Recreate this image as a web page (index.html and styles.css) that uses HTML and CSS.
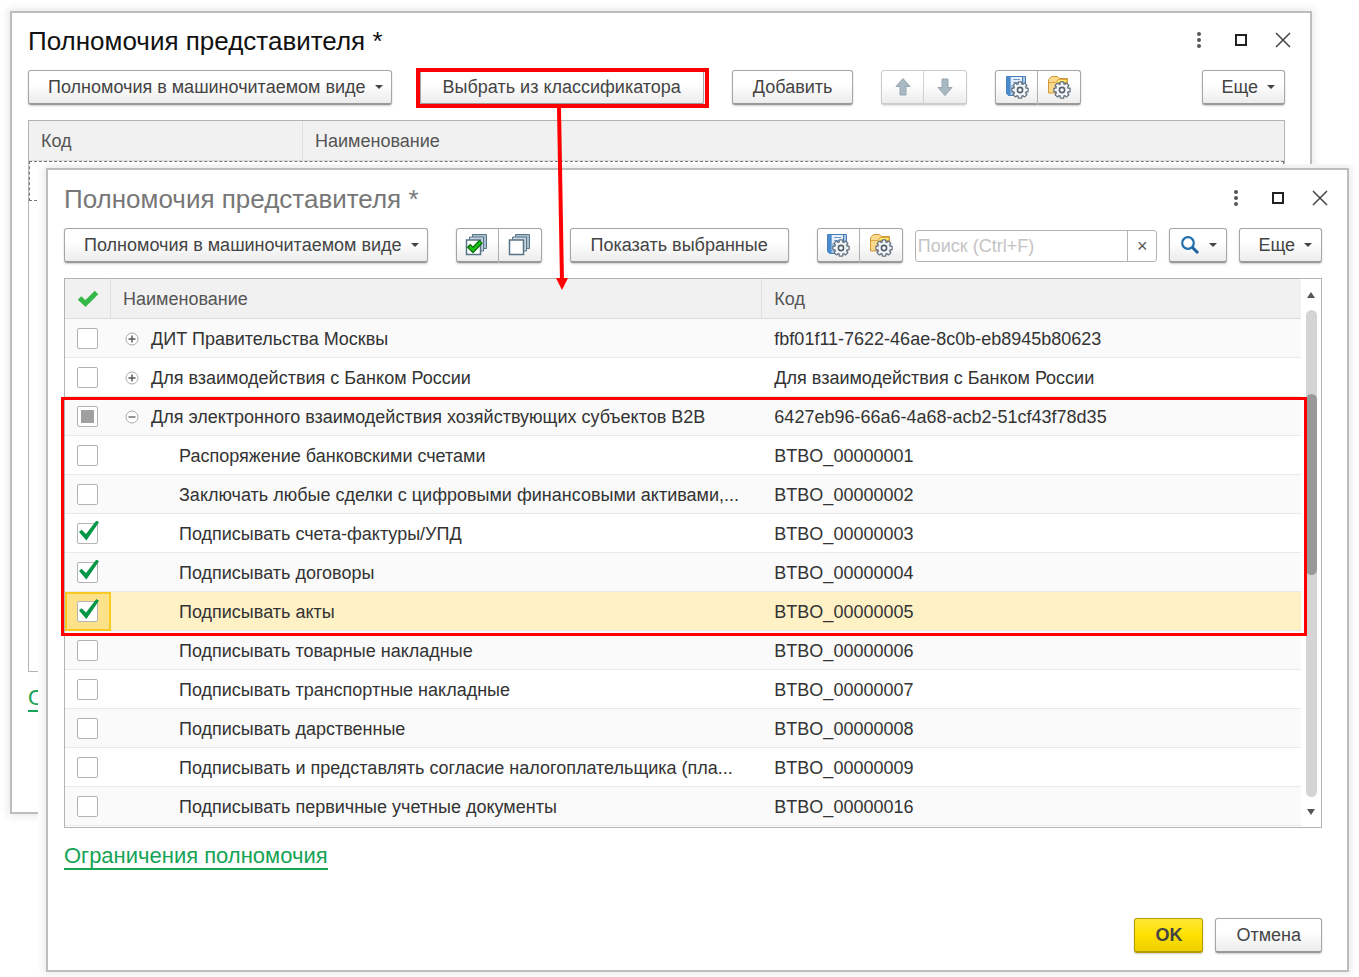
FILE: index.html
```html
<!DOCTYPE html>
<html lang="ru">
<head>
<meta charset="utf-8">
<meta name="viewport" content="width=device-width, initial-scale=1">
<title>Полномочия представителя</title>
<link rel="stylesheet" href="styles.css">
</head>
<body>
<svg class="sprite" aria-hidden="true">
  <symbol id="gear" viewBox="0 0 18 18">
    <g fill="#61717f">
      <circle cx="9" cy="9" r="7"/>
      <rect x="6.6" y="0.3" width="4.8" height="17.4" rx="1"/>
      <rect x="6.6" y="0.3" width="4.8" height="17.4" rx="1" transform="rotate(45 9 9)"/>
      <rect x="6.6" y="0.3" width="4.8" height="17.4" rx="1" transform="rotate(90 9 9)"/>
      <rect x="6.6" y="0.3" width="4.8" height="17.4" rx="1" transform="rotate(135 9 9)"/>
    </g>
    <g fill="#f3f6f8">
      <circle cx="9" cy="9" r="5.8"/>
      <rect x="7.8" y="1.5" width="2.4" height="15"/>
      <rect x="7.8" y="1.5" width="2.4" height="15" transform="rotate(45 9 9)"/>
      <rect x="7.8" y="1.5" width="2.4" height="15" transform="rotate(90 9 9)"/>
      <rect x="7.8" y="1.5" width="2.4" height="15" transform="rotate(135 9 9)"/>
    </g>
    <circle cx="9" cy="9" r="2.6" fill="#fff" stroke="#55626d" stroke-width="1.6"/>
  </symbol>
  <symbol id="icon-report" viewBox="0 0 24 24">
    <path d="M1.500 1.500h19v19h-17l-2-2z" fill="#a9caea" stroke="#4a7db4"/>
    <path d="M1.500 1.500h4v19h-2l-2-2z" fill="#4b8bcc"/>
    <path d="M6 2h11v8H6z" fill="#e4effa"/>
    <path d="M8 4.500h7M8 7.500h7" stroke="#6d9bcb"/>
    <path d="M17.500 2v8" stroke="#4a7db4"/>
    <use href="#gear" x="6" y="6" width="18" height="18"/>
  </symbol>
  <symbol id="icon-folder" viewBox="0 0 24 24">
    <path d="M1.500 18V4.500L4.500 1.500h6l2 2h8v14.500z" fill="#fbd98a" stroke="#d2983a"/>
    <path d="M2 7.500h7l2-3h9v3H11" fill="#ffe96a" stroke="#dba541"/>
    <use href="#gear" x="6" y="6" width="18" height="18"/>
  </symbol>
  <symbol id="icon-up" viewBox="0 0 24 24">
    <path d="M12 3.500l7 8h-4v8.500H9v-8.500H5z" fill="#a9b9c2" stroke="#95a7b2"/>
  </symbol>
  <symbol id="icon-check-all" viewBox="0 0 24 24">
    <path d="M7.500 6V1.500h14v14H17" fill="#a9bfcd" stroke="#587487"/>
    <path d="M4.500 8V4h14v14H16" fill="#c8d5de" stroke="#587487"/>
    <path d="M1.500 7h14v14.500h-14z" fill="#fff" stroke="#587487" stroke-width="1.500"/>
    <path d="M3.500 12.500l4.500 4.500L16 8.500" fill="none" stroke="#0a6a0a" stroke-width="5"/>
    <path d="M4.500 13.500l3.500 3.500 7.500-8" fill="none" stroke="#18c518" stroke-width="2.500"/>
  </symbol>
  <symbol id="icon-uncheck-all" viewBox="0 0 24 24">
    <path d="M7.500 6V1.500h14v14H17" fill="#a9bfcd" stroke="#587487"/>
    <path d="M4.500 8V4h14v14H16" fill="#c8d5de" stroke="#587487"/>
    <path d="M1.500 7h14v14.500h-14z" fill="#fff" stroke="#587487" stroke-width="1.500"/>
  </symbol>
  <symbol id="icon-search" viewBox="0 0 20 20">
    <circle cx="8" cy="8" r="5.800" fill="none" stroke="#2270b0" stroke-width="2.200"/>
    <path d="M12.500 12.500l5.500 5.500" stroke="#1c639f" stroke-width="3"/>
  </symbol>
  <symbol id="icon-dots" viewBox="0 0 16 16">
    <g fill="#555"><circle cx="8" cy="2" r="2"/><circle cx="8" cy="8" r="2"/><circle cx="8" cy="14" r="2"/></g>
  </symbol>
  <symbol id="icon-max" viewBox="0 0 16 16">
    <path d="M3 3h10v10H3z" fill="none" stroke="#222" stroke-width="2"/>
  </symbol>
  <symbol id="icon-close" viewBox="0 0 16 16">
    <path d="M1 1l14 14M15 1L1 15" stroke="#444" stroke-width="1.500"/>
  </symbol>
  <symbol id="icon-plus" viewBox="0 0 14 14">
    <circle cx="7" cy="7" r="6" fill="#fff" stroke="#aaa"/><path d="M3.500 7h7M7 3.500v7" stroke="#555" stroke-width="1.400"/>
  </symbol>
  <symbol id="icon-minus" viewBox="0 0 14 14">
    <circle cx="7" cy="7" r="6" fill="#fff" stroke="#aaa"/><path d="M3.500 7h7" stroke="#666" stroke-width="1.400"/>
  </symbol>
</svg>

<main class="desktop">
  <section class="window window-back">
    <header class="titlebar">
      <h1>Полномочия представителя *</h1>
      <div class="window-controls">
        <button type="button" aria-label="Меню"><svg><use href="#icon-dots"/></svg></button>
        <button type="button" aria-label="Развернуть"><svg><use href="#icon-max"/></svg></button>
        <button type="button" aria-label="Закрыть"><svg><use href="#icon-close"/></svg></button>
      </div>
    </header>
    <div class="toolbar">
      <button type="button" class="btn btn-menu">Полномочия в машиночитаемом виде<i class="caret"></i></button>
      <button type="button" class="btn btn-pick">Выбрать из классификатора</button>
      <button type="button" class="btn">Добавить</button>
      <div class="group group-off">
        <button type="button" class="btn" aria-label="Переместить вверх" disabled><svg><use href="#icon-up"/></svg></button>
        <button type="button" class="btn" aria-label="Переместить вниз" disabled><svg class="flip"><use href="#icon-up"/></svg></button>
      </div>
      <div class="group">
        <button type="button" class="btn" aria-label="Выбрать настройки"><svg><use href="#icon-report"/></svg></button>
        <button type="button" class="btn" aria-label="Сохранить настройки"><svg><use href="#icon-folder"/></svg></button>
      </div>
      <button type="button" class="btn btn-more push">Еще<i class="caret"></i></button>
    </div>
    <div class="list list-empty">
      <table>
        <colgroup><col class="col-short"><col></colgroup>
        <thead><tr><th>Код</th><th>Наименование</th></tr></thead>
        <tbody><tr class="placeholder"><td colspan="2"></td></tr></tbody>
      </table>
    </div>
    <a class="link" href="#">О</a>
  </section>

  <div class="front-layer">
  <section class="window window-front">
    <header class="titlebar">
      <h2>Полномочия представителя *</h2>
      <div class="window-controls">
        <button type="button" aria-label="Меню"><svg><use href="#icon-dots"/></svg></button>
        <button type="button" aria-label="Развернуть"><svg><use href="#icon-max"/></svg></button>
        <button type="button" aria-label="Закрыть"><svg><use href="#icon-close"/></svg></button>
      </div>
    </header>
    <div class="toolbar">
      <button type="button" class="btn btn-menu">Полномочия в машиночитаемом виде<i class="caret"></i></button>
      <div class="group">
        <button type="button" class="btn" aria-label="Отметить все"><svg><use href="#icon-check-all"/></svg></button>
        <button type="button" class="btn" aria-label="Снять отметки"><svg><use href="#icon-uncheck-all"/></svg></button>
      </div>
      <button type="button" class="btn">Показать выбранные</button>
      <div class="toolbar-tail">
        <div class="group">
          <button type="button" class="btn" aria-label="Выбрать настройки"><svg><use href="#icon-report"/></svg></button>
          <button type="button" class="btn" aria-label="Сохранить настройки"><svg><use href="#icon-folder"/></svg></button>
        </div>
        <div class="search">
          <input type="text" placeholder="Поиск (Ctrl+F)" aria-label="Поиск">
          <button type="button" aria-label="Очистить">×</button>
        </div>
        <button type="button" class="btn btn-find" aria-label="Найти"><svg><use href="#icon-search"/></svg><i class="caret"></i></button>
        <button type="button" class="btn btn-more">Еще<i class="caret"></i></button>
      </div>
    </div>
    <div class="list list-full">
      <table>
        <colgroup><col class="col-mark"><col class="col-name"><col></colgroup>
        <thead>
          <tr>
            <th class="mark"><svg class="head-check" viewBox="0 0 22 18" role="img" aria-label="Отметка"><path d="M2.500 8l6 5.500L19.500 2.500" fill="none" stroke="#35b848" stroke-width="5"/></svg></th>
            <th>Наименование</th><th>Код</th>
          </tr>
        </thead>
        <tbody>
          <tr><td class="mark"><input type="checkbox" aria-labelledby="n1"></td><td id="n1"><svg class="node"><use href="#icon-plus"/></svg>ДИТ Правительства Москвы</td><td>fbf01f11-7622-46ae-8c0b-eb8945b80623</td></tr>
          <tr><td class="mark"><input type="checkbox" aria-labelledby="n2"></td><td id="n2"><svg class="node"><use href="#icon-plus"/></svg>Для взаимодействия с Банком России</td><td>Для взаимодействия с Банком России</td></tr>
        </tbody>
        <tbody class="framed">
          <tr><td class="mark"><input type="checkbox" class="partial" aria-labelledby="n3"></td><td id="n3"><svg class="node"><use href="#icon-minus"/></svg>Для электронного взаимодействия хозяйствующих субъектов B2B</td><td>6427eb96-66a6-4a68-acb2-51cf43f78d35</td></tr>
          <tr><td class="mark"><input type="checkbox" aria-labelledby="n4"></td><td id="n4" class="sub">Распоряжение банковскими счетами</td><td>BTBO_00000001</td></tr>
          <tr><td class="mark"><input type="checkbox" aria-labelledby="n5"></td><td id="n5" class="sub">Заключать любые сделки с цифровыми финансовыми активами,...</td><td>BTBO_00000002</td></tr>
          <tr><td class="mark"><input type="checkbox" checked aria-labelledby="n6"></td><td id="n6" class="sub">Подписывать счета-фактуры/УПД</td><td>BTBO_00000003</td></tr>
          <tr><td class="mark"><input type="checkbox" checked aria-labelledby="n7"></td><td id="n7" class="sub">Подписывать договоры</td><td>BTBO_00000004</td></tr>
          <tr class="current"><td class="mark"><input type="checkbox" checked aria-labelledby="n8"></td><td id="n8" class="sub">Подписывать акты</td><td>BTBO_00000005</td></tr>
        </tbody>
        <tbody>
          <tr><td class="mark"><input type="checkbox" aria-labelledby="n9"></td><td id="n9" class="sub">Подписывать товарные накладные</td><td>BTBO_00000006</td></tr>
          <tr><td class="mark"><input type="checkbox" aria-labelledby="n10"></td><td id="n10" class="sub">Подписывать транспортные накладные</td><td>BTBO_00000007</td></tr>
          <tr><td class="mark"><input type="checkbox" aria-labelledby="n11"></td><td id="n11" class="sub">Подписывать дарственные</td><td>BTBO_00000008</td></tr>
          <tr><td class="mark"><input type="checkbox" aria-labelledby="n12"></td><td id="n12" class="sub">Подписывать и представлять согласие налогоплательщика (пла...</td><td>BTBO_00000009</td></tr>
          <tr><td class="mark"><input type="checkbox" aria-labelledby="n13"></td><td id="n13" class="sub">Подписывать первичные учетные документы</td><td>BTBO_00000016</td></tr>
        </tbody>
      </table>
      <div class="scrollbar" aria-hidden="true">
        <i class="scroll-up"></i>
        <div class="track"><div class="thumb"></div></div>
        <i class="scroll-down"></i>
      </div>
    </div>
    <a class="link" href="#">Ограничения полномочия</a>
    <footer class="actions">
      <button type="button" class="btn btn-ok">OK</button>
      <button type="button" class="btn">Отмена</button>
    </footer>
  </section>
  </div>

  <svg class="pointer" viewBox="0 0 16 184" aria-hidden="true">
    <path d="M5 1l3 174" stroke="#f00" stroke-width="4" stroke-linecap="round"/>
    <path d="M2 171h12l-6 12z" fill="#f00"/>
  </svg>
</main>
</body>
</html>
```
FILE: styles.css
```css
* { box-sizing: border-box; }

body {
  margin: 0;
  background: #fff;
  color: #333;
  font: 18px/22px "Liberation Sans", Arial, sans-serif;
}

button, input { font: inherit; color: inherit; }
.sprite { position: absolute; width: 0; height: 0; }

/* The two windows share one grid cell and overlap */
.desktop {
  display: grid;
  position: relative;
  min-height: 100vh;
}

.window {
  display: flex;
  flex-direction: column;
  background: #fff;
  border: 2px solid #bdbdbd;
  padding: 14px 25px 17px 16px;
  box-shadow: 0 0 8px 2px #e8e8e8;
}

.window-back {
  grid-area: 1 / 1;
  margin: 11px 47px 163px 10px;
}

.front-layer {
  grid-area: 1 / 1;
  z-index: 1;
  display: flex;
  margin: 164px 0 0 38px;
  padding: 4px 10px 5px 8px;
  background: #fff;
  overflow: hidden;
}

.window-front { flex: 1; min-width: 0; padding-top: 15px; }
.window-front h2 { color: #777; }

.titlebar {
  display: flex;
  align-items: center;
  justify-content: space-between;
  height: 28px;
}

.titlebar h1,
.titlebar h2 {
  margin: 0;
  font-size: 26px;
  line-height: 28px;
  font-weight: 400;
}
.titlebar h1 { color: #111; }

.window-controls { display: flex; gap: 18px; margin-right: -10px; }
.window-controls button {
  display: flex;
  align-items: center;
  justify-content: center;
  width: 24px;
  height: 24px;
  margin-bottom: 2px;
  padding: 0;
  border: 0;
  background: none;
}
.window-controls svg { width: 16px; height: 16px; }

/* Toolbar */
.toolbar {
  display: flex;
  align-items: center;
  gap: 28px;
  margin-top: 15px;
}
.toolbar-tail { display: flex; flex: 1; align-items: center; gap: 12px; min-width: 0; }
.push { margin-left: auto; }

.btn {
  display: flex;
  align-items: center;
  justify-content: center;
  flex: none;
  height: 35px;
  padding: 0 20px;
  border: 1px solid #a6a6a6;
  border-bottom: 2px solid #999;
  border-radius: 3px;
  background: linear-gradient(#fff 40%, #ececec);
  box-shadow: 0 1px 2px #ccc;
  color: #444;
  white-space: nowrap;
}
.btn svg { width: 24px; height: 24px; }
.btn-menu { padding: 0 8px 0 19px; }
.btn-more { padding: 0 9px 0 18px; }

.caret {
  margin-left: 9px;
  border: 4px solid transparent;
  border-top-color: #444;
  border-bottom: 0;
}

.btn-pick { position: relative; padding: 0 22px; }
.btn-pick::after {
  content: "";
  position: absolute;
  inset: -3px -6px -5px -5px;
  border: 4px solid #f00;
}

.group { display: flex; flex: none; }
.group .btn { width: 43px; padding: 0; }
.group .btn:first-child { border-radius: 3px 0 0 3px; }
.group .btn:last-child { border-left: 0; border-radius: 0 3px 3px 0; }
.group-off .btn { border-color: #ccc; box-shadow: 0 1px 2px #e4e4e4; }
.flip { transform: rotate(180deg); }

.search {
  display: flex;
  flex: 1;
  min-width: 0;
  height: 32px;
  border: 1px solid #b3b3b3;
  border-radius: 3px;
}
.search input {
  flex: 1;
  min-width: 0;
  padding: 0 2px;
  border: 0;
  background: none;
}
.search input::placeholder { color: #c4c4c4; }
.search button {
  width: 29px;
  padding: 0;
  border: 0;
  border-left: 1px solid #b3b3b3;
  background: none;
  color: #555;
}

.btn-find { padding: 0 9px 0 10px; }
.btn-find svg { width: 20px; height: 20px; }

/* Lists */
.list {
  display: flex;
  margin-top: 15px;
  border: 1px solid #b3b3b3;
}
.list table {
  flex: 1;
  width: 100%;
  min-width: 0;
  table-layout: fixed;
  border-collapse: separate;
  border-spacing: 0;
}
.list th {
  height: 40px;
  padding: 0 12px;
  background: #f1f1f1;
  border-right: 1px solid #e0e0e0;
  border-bottom: 1px solid #dcdcdc;
  color: #555;
  font-weight: 400;
  text-align: left;
}
.list th:last-child { border-right: 0; }
.list td {
  height: 39px;
  padding: 2px 12px 0;
  border-bottom: 1px solid #e8e8e8;
  overflow: hidden;
  white-space: nowrap;
  text-overflow: ellipsis;
}
.list .mark { padding: 0 0 0 12px; }
.list .sub { padding: 2px 0 0 68px; }

.list-empty { flex: 1; }
.list-empty table { align-self: flex-start; }
.col-short { width: 274px; }
.list-empty .placeholder td { height: 40px; border: 1px dashed #777; }

.list-full tbody tr { background: #fff; }
.list-full tbody:first-of-type tr:nth-child(odd),
.framed tr:nth-child(odd),
.list-full tbody:last-child tr:nth-child(odd) { background: #fafafa; }
.list-full { padding-bottom: 1px; }
.col-mark { width: 46px; }
.col-name { width: 52.7%; }

.list-full tbody .current,
.list-full tbody.framed .current { background: #fef1c6; }
.current .mark {
  background: #fee28a;
  border: 2px solid #f8c920;
  padding-left: 10px;
}

.framed { position: relative; z-index: 2; }
.framed::after {
  content: "";
  position: absolute;
  inset: 0 -6px -5px -4px;
  border: 3px solid #f00;
  pointer-events: none;
}

.node { width: 14px; height: 14px; margin: 0 12px 0 2px; vertical-align: -1px; }
.head-check { display: block; width: 22px; height: 18px; }

input[type="checkbox"] {
  appearance: none;
  display: block;
  width: 21px;
  height: 21px;
  margin: 0;
  border: 1px solid #b3b3b3;
  border-radius: 2px;
  background: #fff;
  position: relative;
}
.partial::before {
  content: "";
  display: block;
  width: 13px;
  height: 13px;
  margin: 3px;
  background: #a0a0a0;
}
input[type="checkbox"]:checked::after {
  content: "";
  position: absolute;
  inset: -3px -2px 2px 1px;
  background: #009646;
  clip-path: polygon(0 57%, 13% 46%, 35% 67%, 87% 0, 100% 9%, 37% 100%);
}

.scrollbar {
  display: flex;
  flex-direction: column;
  align-items: center;
  flex: none;
  width: 20px;
  padding: 13px 0 11px;
}
.scroll-up, .scroll-down { border: 4px solid transparent; }
.scroll-up { border-top: 0; border-bottom: 6px solid #555; }
.scroll-down { border-bottom: 0; border-top: 6px solid #555; }
.track {
  flex: 1;
  width: 11px;
  margin: 12px 0;
  padding-top: 84px;
  border-radius: 6px;
  background: #d4d4d4;
}
.thumb { height: 181px; border-radius: 6px; background: #999; }

.link {
  align-self: flex-start;
  margin-top: 16px;
  border-bottom: 2px solid #15a355;
  color: #15a355;
  font-size: 22px;
  line-height: 24px;
  text-decoration: none;
}
.window-back .link { margin-top: 14px; margin-bottom: 83px; }

.actions {
  display: flex;
  justify-content: flex-end;
  gap: 12px;
  margin-top: auto;
}
.btn-ok {
  width: 69px;
  border-color: #b39b00;
  background: linear-gradient(#ffe838, #ffe000 50%, #edcf00);
  font-weight: 700;
}

/* Callout arrow between the windows */
.pointer {
  position: absolute;
  z-index: 3;
  left: 554px;
  top: 107px;
  width: 16px;
  height: 184px;
}
```
